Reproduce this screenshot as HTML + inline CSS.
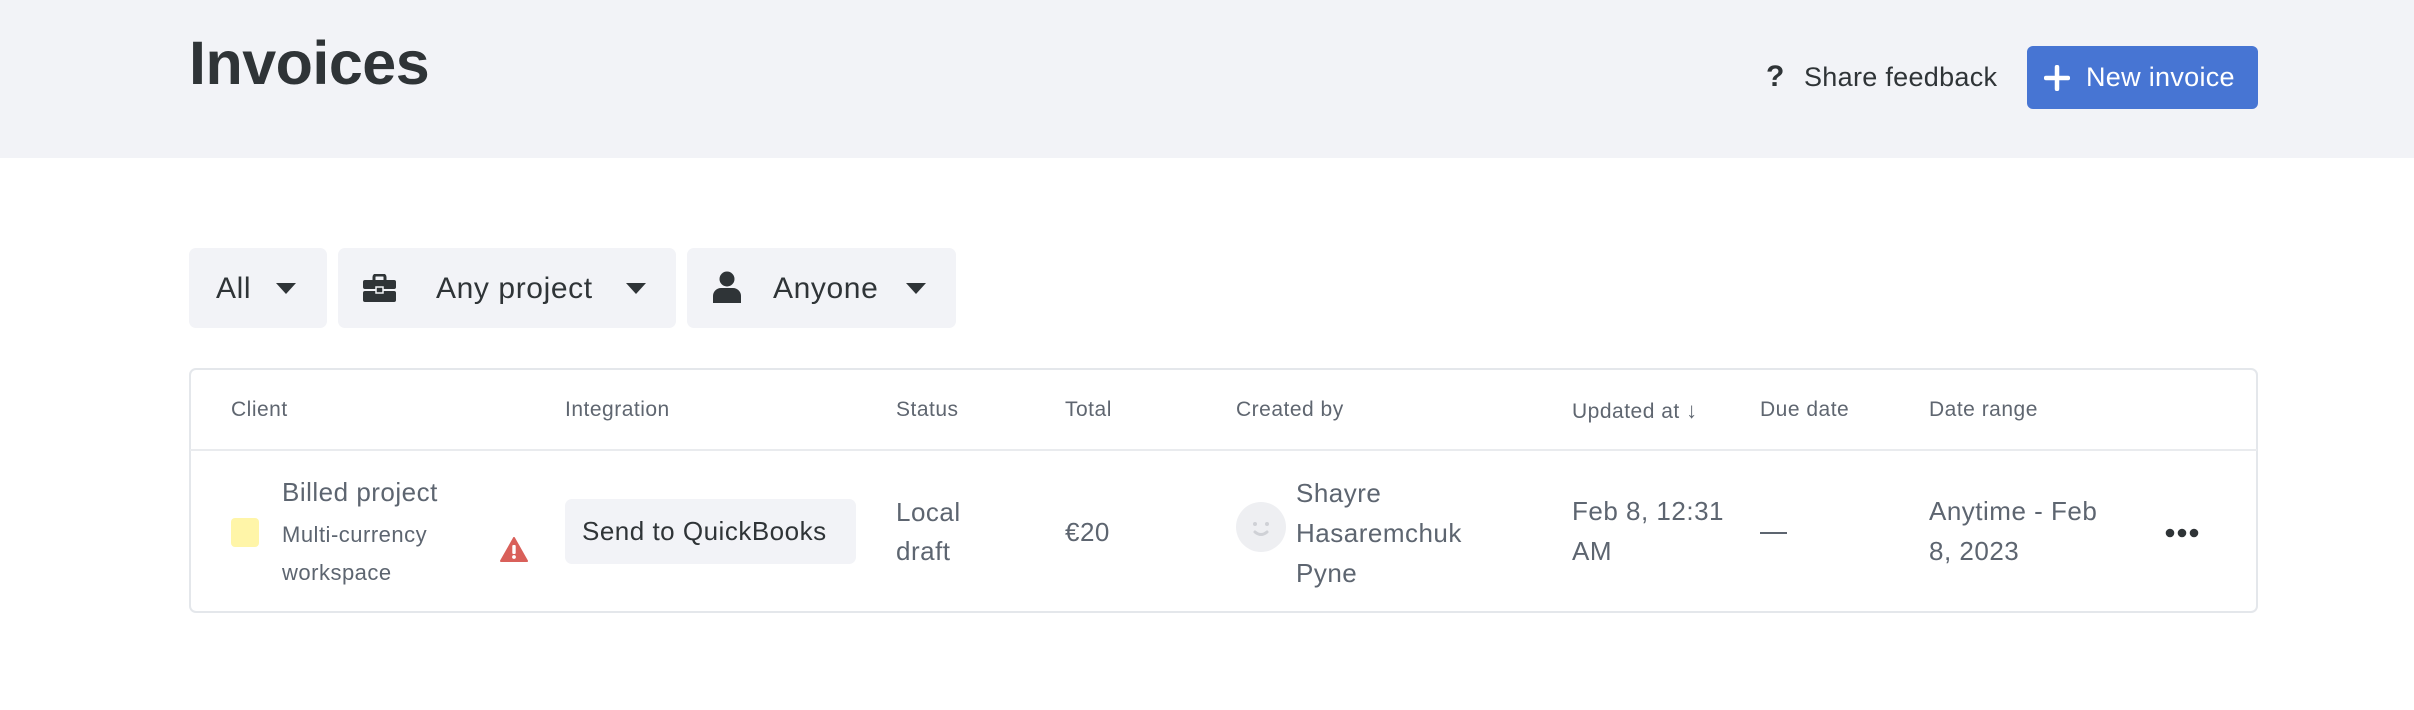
<!DOCTYPE html>
<html><head><meta charset="utf-8"><style>
*{margin:0;padding:0;box-sizing:border-box}
body{width:2414px;height:710px;background:#fff;font-family:"Liberation Sans",sans-serif;position:relative;overflow:hidden;color:#2f3437}
.a{position:absolute;white-space:nowrap}
.hdr{position:absolute;left:0;top:0;width:2414px;height:158px;background:#f2f3f7}
.f{position:absolute;top:248px;height:80px;background:#f2f3f7;border-radius:7px}
.ft{font-size:30px;color:#2f3437;top:272px;letter-spacing:0.6px}
.tri{position:absolute;width:0;height:0;border-left:10px solid transparent;border-right:10px solid transparent;border-top:11px solid #2f3437;top:283px}
.th{font-size:21px;color:#5f6670;top:398px;letter-spacing:0.5px}
.td{font-size:26px;color:#5d6570;line-height:39px;letter-spacing:0.5px}
</style></head><body>
<div class="hdr"></div>
<div class="a" style="left:189px;top:28px;font-size:61px;font-weight:bold;color:#2f3437;letter-spacing:-0.5px">Invoices</div>
<div class="a" style="left:1766px;top:60px;font-size:30px;font-weight:bold;color:#2f3437">?</div>
<div class="a" style="left:1804px;top:62px;font-size:27px;color:#2f3437;letter-spacing:0.3px">Share feedback</div>
<div class="a" style="left:2027px;top:46px;width:231px;height:63px;background:#4775d3;border-radius:6px"></div>
<svg class="a" style="left:2044px;top:65px" width="26" height="26"><path d="M13 2v22M2 13h22" stroke="#fff" stroke-width="4.5" stroke-linecap="round"/></svg>
<div class="a" style="left:2086px;top:62px;font-size:27px;color:#fff;letter-spacing:0.3px">New invoice</div>

<div class="f" style="left:189px;width:138px"></div>
<div class="a ft" style="left:216px">All</div>
<div class="tri" style="left:276px"></div>
<div class="f" style="left:338px;width:338px"></div>
<svg class="a" style="left:363px;top:274px" width="33" height="28" viewBox="0 0 33 28"><path d="M11 6V3a2 2 0 0 1 2-2h7a2 2 0 0 1 2 2v3" fill="none" stroke="#2f3437" stroke-width="3"/><rect x="0" y="6" width="33" height="9" rx="2" fill="#2f3437"/><rect x="0" y="17" width="33" height="11" rx="2" fill="#2f3437"/><rect x="13" y="13" width="7" height="6" fill="#2f3437" stroke="#f2f3f7" stroke-width="1.5"/></svg>
<div class="a ft" style="left:436px">Any project</div>
<div class="tri" style="left:626px"></div>
<div class="f" style="left:687px;width:269px"></div>
<svg class="a" style="left:713px;top:271px" width="28" height="32" viewBox="0 0 28 32"><circle cx="14" cy="8" r="7.5" fill="#2f3437"/><path d="M0 32v-7a8 8 0 0 1 8-8h12a8 8 0 0 1 8 8v7z" fill="#2f3437"/></svg>
<div class="a ft" style="left:773px">Anyone</div>
<div class="tri" style="left:906px"></div>

<div class="a" style="left:189px;top:368px;width:2069px;height:245px;border:2px solid #e4e7eb;border-radius:7px"></div>
<div class="a" style="left:190px;top:449px;width:2067px;height:2px;background:#e9ebee"></div>
<div class="a th" style="left:231px">Client</div>
<div class="a th" style="left:565px">Integration</div>
<div class="a th" style="left:896px">Status</div>
<div class="a th" style="left:1065px">Total</div>
<div class="a th" style="left:1236px">Created by</div>
<div class="a th" style="left:1572px">Updated at <span style="font-size:22px;font-weight:bold">&#8595;</span></div>
<div class="a th" style="left:1760px">Due date</div>
<div class="a th" style="left:1929px">Date range</div>

<div class="a" style="left:231px;top:518px;width:28px;height:29px;background:#fff5a8;border-radius:4px"></div>
<div class="a td" style="left:282px;top:473px">Billed project</div>
<div class="a" style="left:282px;top:516px;font-size:22px;color:#5d6570;line-height:38px;letter-spacing:0.5px">Multi-currency<br>workspace</div>
<svg class="a" style="left:500px;top:537px" width="28" height="25" viewBox="0 0 28 25"><path d="M14 1L27 24H1z" fill="#d9605a" stroke="#d9605a" stroke-width="2" stroke-linejoin="round"/><rect x="12.3" y="8" width="3.4" height="9" rx="1" fill="#fff"/><circle cx="14" cy="20" r="1.9" fill="#fff"/></svg>
<div class="a" style="left:565px;top:499px;width:291px;height:65px;background:#f2f3f7;border-radius:7px"></div>
<div class="a" style="left:582px;top:516px;font-size:26px;color:#2f3437;letter-spacing:0.5px">Send to QuickBooks</div>
<div class="a td" style="left:896px;top:493px">Local<br>draft</div>
<div class="a td" style="left:1065px;top:513px">€20</div>
<svg class="a" style="left:1236px;top:502px" width="50" height="50"><circle cx="25" cy="25" r="25" fill="#eeeff2"/><circle cx="19" cy="22" r="2" fill="#cfd1d6"/><circle cx="31" cy="22" r="2" fill="#cfd1d6"/><path d="M19 30q6 5 12 0" stroke="#cfd1d6" stroke-width="3" fill="none" stroke-linecap="round"/></svg>
<div class="a td" style="left:1296px;top:473px;line-height:40px">Shayre<br>Hasaremchuk<br>Pyne</div>
<div class="a td" style="left:1572px;top:491px;line-height:40px">Feb 8, 12:31<br>AM</div>
<div class="a" style="left:1760px;top:532px;width:27px;height:2px;background:#5d6570"></div>
<div class="a td" style="left:1929px;top:491px;line-height:40px">Anytime - Feb<br>8, 2023</div>
<svg class="a" style="left:2165px;top:527px" width="36" height="12"><circle cx="5" cy="6" r="4.3" fill="#2f3437"/><circle cx="17" cy="6" r="4.3" fill="#2f3437"/><circle cx="29" cy="6" r="4.3" fill="#2f3437"/></svg>
</body></html>
